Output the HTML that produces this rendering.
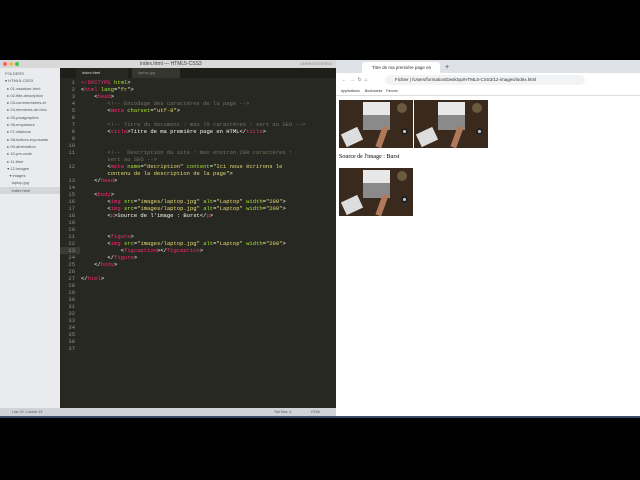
<!DOCTYPE html>
<html><head><meta charset="utf-8"><style>
*{margin:0;padding:0;box-sizing:border-box}
body{width:640px;height:480px;background:#000;position:relative;overflow:hidden;font-family:"Liberation Sans",sans-serif}
.abs{position:absolute}
.code{font-family:"Liberation Mono",monospace;font-size:5.5px;line-height:7px;white-space:pre;color:#f8f8f2}
.t{color:#f92672}.a{color:#a6e22e}.s{color:#e6db74}.c{color:#75715e}
.img{position:absolute;width:74px;height:48px;background:#3a2a1e;overflow:hidden}
.img .lap{position:absolute;left:24px;top:2px;width:27px;height:13px;background:#e8e8e8}
.img .kb{position:absolute;left:24px;top:15px;width:27px;height:15px;background:#8a8a8a}
.img .pad{position:absolute;left:4px;top:30px;width:18px;height:14px;background:#ddd;transform:rotate(-25deg)}
.img .arm{position:absolute;left:40px;top:26px;width:6px;height:22px;background:#b07a5a;transform:rotate(20deg)}
.img .cup{position:absolute;left:62px;top:28px;width:7px;height:7px;border-radius:50%;background:#ccc;border:2px solid #222}
.img .lamp{position:absolute;left:58px;top:3px;width:10px;height:10px;border-radius:50%;background:#6b5a40}
</style></head><body>
<!-- Sublime -->
<div class="abs" style="left:0;top:60px;width:336px;height:8px;background:#d8d8d8"></div>
<div class="abs" style="left:3px;top:62px;width:4px;height:4px;border-radius:50%;background:#fc605c"></div>
<div class="abs" style="left:9px;top:62px;width:4px;height:4px;border-radius:50%;background:#fdbc40"></div>
<div class="abs" style="left:15px;top:62px;width:4px;height:4px;border-radius:50%;background:#34c84a"></div>
<div class="abs" style="left:140px;top:60px;font-size:5px;color:#444;line-height:8px">index.html — HTML5-CSS3</div>
<div class="abs" style="left:300px;top:60px;font-size:4px;color:#888;line-height:8px">UNREGISTERED</div>
<div class="abs" style="left:0;top:68px;width:60px;height:340px;background:#e9ebee"></div>
<div class="abs" style="left:0;top:187px;width:60px;height:7px;background:#d4d6d9"></div>
<div class="abs" style="left:0;top:70px;width:60px;font-size:4px;line-height:7.3px;color:#555;padding-left:5px;white-space:nowrap;overflow:hidden">FOLDERS<br>▾ HTML5-CSS3<br>&nbsp;&nbsp;▸ 01-ossature-html<br>&nbsp;&nbsp;▸ 02-title-description<br>&nbsp;&nbsp;▸ 03-commentaires-et<br>&nbsp;&nbsp;▸ 04-elements-de-bloc<br>&nbsp;&nbsp;▸ 05-paragraphes<br>&nbsp;&nbsp;▸ 06-emphases<br>&nbsp;&nbsp;▸ 07-citations<br>&nbsp;&nbsp;▸ 08-indices-exposants<br>&nbsp;&nbsp;▸ 09-abreviation<br>&nbsp;&nbsp;▸ 10-pre-code<br>&nbsp;&nbsp;▸ 11-time<br>&nbsp;&nbsp;▾ 12-images<br>&nbsp;&nbsp;&nbsp;&nbsp;▾ images<br>&nbsp;&nbsp;&nbsp;&nbsp;&nbsp;&nbsp;laptop.jpg<br>&nbsp;&nbsp;&nbsp;&nbsp;&nbsp;&nbsp;index.html</div>
<div class="abs" style="left:60px;top:68px;width:276px;height:340px;background:#272822"></div>
<div class="abs" style="left:60px;top:68px;width:276px;height:10px;background:#1e1f1a"></div>
<div class="abs" style="left:76px;top:68px;width:52px;height:10px;background:#272822;font-size:4px;color:#ddd;line-height:10px;padding-left:6px">index.html</div>
<div class="abs" style="left:132px;top:68px;width:48px;height:10px;background:#35362f;font-size:4px;color:#888;line-height:10px;padding-left:6px">laptop.jpg</div>
<div class="abs" style="left:60px;top:247px;width:20px;height:7px;background:#3a3b33"></div>
<div class="abs code" style="left:62px;top:79px;width:13px;text-align:right;color:#90908a">1
2
3
4
5
6
7
8
9
10
11

12

13
14
15
16
17
18
19
20
21
22
23
24
25
26
27
28
29
30
31
32
33
34
35
36
37</div>
<div class="abs code" style="left:81px;top:79px"><span class="t">&lt;!DOCTYPE</span> <span class="a">html</span>&gt;
&lt;<span class="t">html</span> <span class="a">lang</span>=<span class="s">"fr"</span>&gt;
    &lt;<span class="t">head</span>&gt;
        <span class="c">&lt;!-- Encodage des caractères de la page --&gt;</span>
        &lt;<span class="t">meta</span> <span class="a">charset</span>=<span class="s">"utf-8"</span>&gt;

        <span class="c">&lt;!-- Titre du document : max 70 caractères : sert au SEO --&gt;</span>
        &lt;<span class="t">title</span>&gt;Titre de ma première page en HTML&lt;/<span class="t">title</span>&gt;


        <span class="c">&lt;!--  Description du site : max environ 200 caractères :</span>
        <span class="c">sert au SEO --&gt;</span>
        &lt;<span class="t">meta</span> <span class="a">name</span>=<span class="s">"decription"</span> <span class="a">content</span>=<span class="s">"Ici nous écrirons le</span>
<span class="s">        contenu de la description de la page"</span>&gt;
    &lt;/<span class="t">head</span>&gt;

    &lt;<span class="t">body</span>&gt;
        &lt;<span class="t">img</span> <span class="a">src</span>=<span class="s">"images/laptop.jpg"</span> <span class="a">alt</span>=<span class="s">"Laptop"</span> <span class="a">width</span>=<span class="s">"200"</span>&gt;
        &lt;<span class="t">img</span> <span class="a">src</span>=<span class="s">"images/laptop.jpg"</span> <span class="a">alt</span>=<span class="s">"Laptop"</span> <span class="a">width</span>=<span class="s">"200"</span>&gt;
        &lt;<span class="t">p</span>&gt;Source de l'image : Burst&lt;/<span class="t">p</span>&gt;


        &lt;<span class="t">figure</span>&gt;
        &lt;<span class="t">img</span> <span class="a">src</span>=<span class="s">"images/laptop.jpg"</span> <span class="a">alt</span>=<span class="s">"Laptop"</span> <span class="a">width</span>=<span class="s">"200"</span>&gt;
            &lt;<span class="t">figcaption</span>&gt;&lt;/<span class="t">figcaption</span>&gt;
        &lt;/<span class="t">figure</span>&gt;
    &lt;/<span class="t">body</span>&gt;

&lt;/<span class="t">html</span>&gt;</div>
<div class="abs" style="left:0;top:408px;width:336px;height:8px;background:#d0d3d7;font-size:3.5px;line-height:8px;color:#555;padding-left:12px">Line 23, Column 13<span style="position:absolute;left:274px">Tab Size: 4</span><span style="position:absolute;left:311px">HTML</span></div>
<div class="abs" style="left:0;top:416px;width:640px;height:2px;background:#3a4a66"></div>
<!-- Chrome -->
<div class="abs" style="left:336px;top:60px;width:304px;height:13px;background:#dee1e6"></div>
<div class="abs" style="left:362px;top:62px;width:78px;height:11px;background:#fff;border-radius:3px 3px 0 0;font-size:4.5px;line-height:11px;padding-left:10px;color:#333">Titre de ma première page en</div>
<div class="abs" style="left:445px;top:62px;font-size:7px;line-height:11px;color:#444">+</div>
<div class="abs" style="left:336px;top:73px;width:304px;height:14px;background:#fff;font-size:5px;line-height:14px;color:#666;padding-left:6px">←&nbsp; →&nbsp; ↻&nbsp; ⌂</div>
<div class="abs" style="left:385px;top:75px;width:200px;height:10px;background:#f1f3f4;border-radius:5px;font-size:4.5px;line-height:10px;padding-left:10px;color:#333">Fichier | /Users/formation/Desktop/HTML5-CSS3/12-images/index.html</div>
<div class="abs" style="left:336px;top:87px;width:304px;height:9px;background:#fff;border-bottom:1px solid #ddd;font-size:3.5px;line-height:8px;color:#333;padding-left:5px">Applications &nbsp;&nbsp;&nbsp;&nbsp;Bookmarks &nbsp;&nbsp;&nbsp;Favoris</div>
<div class="abs" style="left:336px;top:96px;width:304px;height:320px;background:#fff"></div>
<div class="img" style="left:339px;top:100px"><div class="lamp"></div><div class="lap"></div><div class="kb"></div><div class="pad"></div><div class="arm"></div><div class="cup"></div></div>
<div class="img" style="left:414px;top:100px"><div class="lamp"></div><div class="lap"></div><div class="kb"></div><div class="pad"></div><div class="arm"></div><div class="cup"></div></div>
<div class="abs" style="left:339px;top:154px;font-family:'Liberation Serif',serif;font-size:6px;color:#000">Source de l'image : Burst</div>
<div class="img" style="left:339px;top:168px"><div class="lamp"></div><div class="lap"></div><div class="kb"></div><div class="pad"></div><div class="arm"></div><div class="cup"></div></div>
</body></html>
